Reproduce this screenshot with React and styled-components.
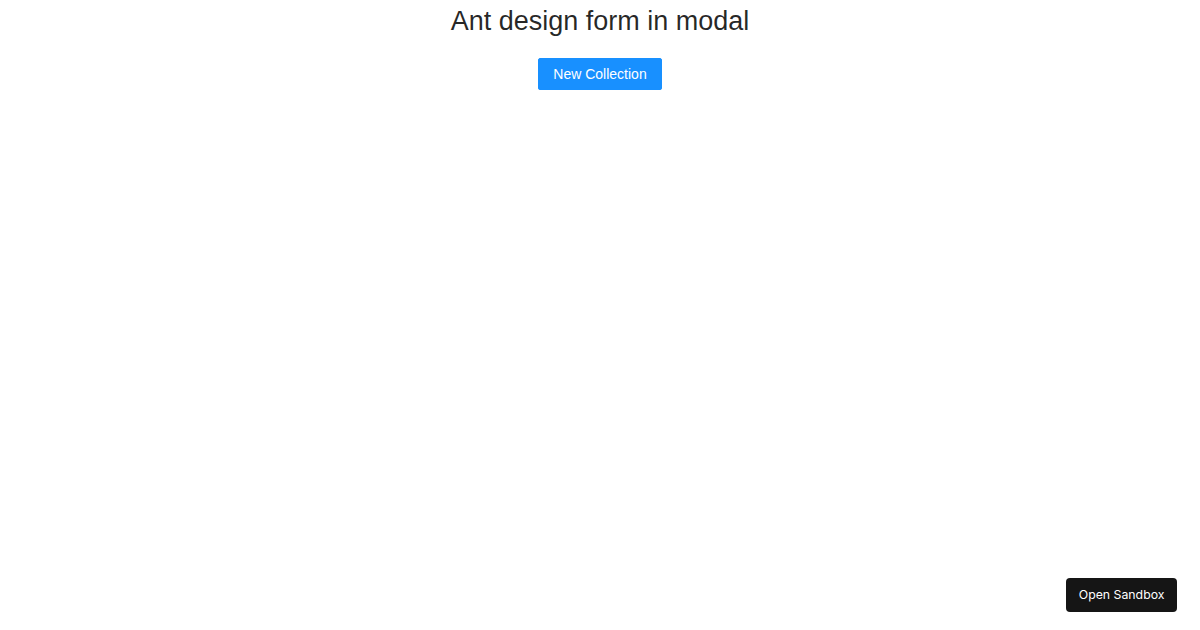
import React from 'react';
import styled, { createGlobalStyle } from 'styled-components';

const GlobalStyle = createGlobalStyle`
  body {
    margin: 0;
    background: #fff;
    font-family: "Liberation Sans", Arial, sans-serif;
    color: rgba(0, 0, 0, 0.85);
  }
`;

export default function App() {
  return (
    <>
      <GlobalStyle />
      <Page>
        <Title>Ant design form in modal</Title>
        <PrimaryButton type="button">New Collection</PrimaryButton>
      </Page>
      <SandboxLink href="#">Open Sandbox</SandboxLink>
    </>
  );
}

const Page = styled.div`
  display: flex;
  flex-direction: column;
  align-items: center;
  padding-top: 3px;
`;

const Title = styled.h1`
  margin: 0 0 18px;
  font-size: 27px;
  font-weight: 400;
  line-height: 37px;
  color: rgba(0, 0, 0, 0.85);
`;

const PrimaryButton = styled.button`
  height: 32px;
  padding: 0 14.5px;
  border: 1px solid #1890ff;
  border-radius: 2px;
  background: #1890ff;
  color: #fff;
  font-family: "Liberation Sans", Arial, sans-serif;
  font-size: 14px;
  box-shadow: 0 2px 0 rgba(0, 0, 0, 0.045);
  cursor: pointer;
`;

const SandboxLink = styled.a`
  position: fixed;
  right: 23px;
  bottom: 18px;
  box-sizing: border-box;
  display: flex;
  align-items: center;
  height: 34px;
  padding: 0 12.5px 1px;
  border-radius: 4px;
  background: #151515;
  color: #fff;
  font-family: Inter, "Liberation Sans", sans-serif;
  font-size: 12.3px;
  text-decoration: none;
`;
